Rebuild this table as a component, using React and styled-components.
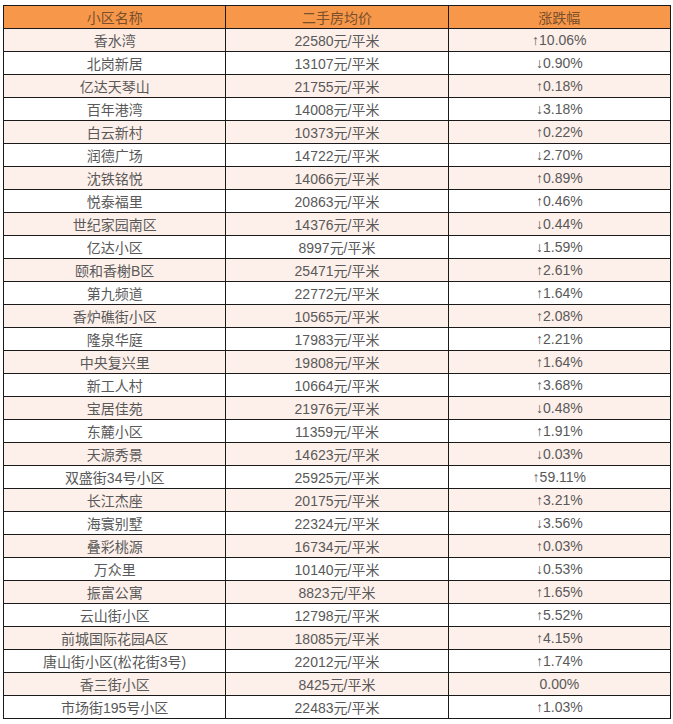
import React from "react";
import styled, { createGlobalStyle } from "styled-components";

const GlobalStyle = createGlobalStyle`
  html, body {
    margin: 0;
    padding: 0;
    background: #fff;
  }
  body {
    font-family: "Liberation Sans", "Noto Sans CJK SC", sans-serif;
  }
`;

const Page = styled.div`
  padding: 5px 3px 0 3px;
  width: 668px;
`;

const Table = styled.table`
  width: 668px;
  border-collapse: collapse;
  table-layout: fixed;
  font-size: 14px;
  color: #595959;
`;

const HeadCell = styled.th`
  height: 22px;
  padding: 0;
  border: 1px solid #1a1a1a;
  background: #f7974a;
  color: #7a4f2a;
  font-weight: normal;
  text-align: center;
`;

const Row = styled.tr`
  background: ${(p) => (p.$shaded ? "#fdefe9" : "#ffffff")};
`;

const Cell = styled.td`
  height: 22px;
  padding: 0;
  border: 1px solid #1a1a1a;
  text-align: center;
  white-space: nowrap;
`;

const rows = [
  ["香水湾", "22580", "↑10.06%"],
  ["北岗新居", "13107", "↓0.90%"],
  ["亿达天琴山", "21755", "↑0.18%"],
  ["百年港湾", "14008", "↓3.18%"],
  ["白云新村", "10373", "↑0.22%"],
  ["润德广场", "14722", "↓2.70%"],
  ["沈铁铭悦", "14066", "↑0.89%"],
  ["悦泰福里", "20863", "↑0.46%"],
  ["世纪家园南区", "14376", "↓0.44%"],
  ["亿达小区", "8997", "↓1.59%"],
  ["颐和香榭B区", "25471", "↑2.61%"],
  ["第九频道", "22772", "↑1.64%"],
  ["香炉礁街小区", "10565", "↑2.08%"],
  ["隆泉华庭", "17983", "↑2.21%"],
  ["中央复兴里", "19808", "↑1.64%"],
  ["新工人村", "10664", "↑3.68%"],
  ["宝居佳苑", "21976", "↓0.48%"],
  ["东麓小区", "11359", "↑1.91%"],
  ["天源秀景", "14623", "↓0.03%"],
  ["双盛街34号小区", "25925", "↑59.11%"],
  ["长江杰座", "20175", "↑3.21%"],
  ["海寰别墅", "22324", "↓3.56%"],
  ["叠彩桃源", "16734", "↑0.03%"],
  ["万众里", "10140", "↓0.53%"],
  ["振富公寓", "8823", "↑1.65%"],
  ["云山街小区", "12798", "↑5.52%"],
  ["前城国际花园A区", "18085", "↑4.15%"],
  ["唐山街小区(松花街3号)", "22012", "↑1.74%"],
  ["香三街小区", "8425", "0.00%"],
  ["市场街195号小区", "22483", "↑1.03%"],
];

export default function App() {
  return (
    <Page>
      <GlobalStyle />
      <Table>
        <thead>
          <tr>
            <HeadCell>小区名称</HeadCell>
            <HeadCell>二手房均价</HeadCell>
            <HeadCell>涨跌幅</HeadCell>
          </tr>
        </thead>
        <tbody>
          {rows.map(([name, price, change], i) => (
            <Row key={name} $shaded={i % 2 === 0}>
              <Cell>{name}</Cell>
              <Cell>{price}元/平米</Cell>
              <Cell>{change}</Cell>
            </Row>
          ))}
        </tbody>
      </Table>
    </Page>
  );
}
